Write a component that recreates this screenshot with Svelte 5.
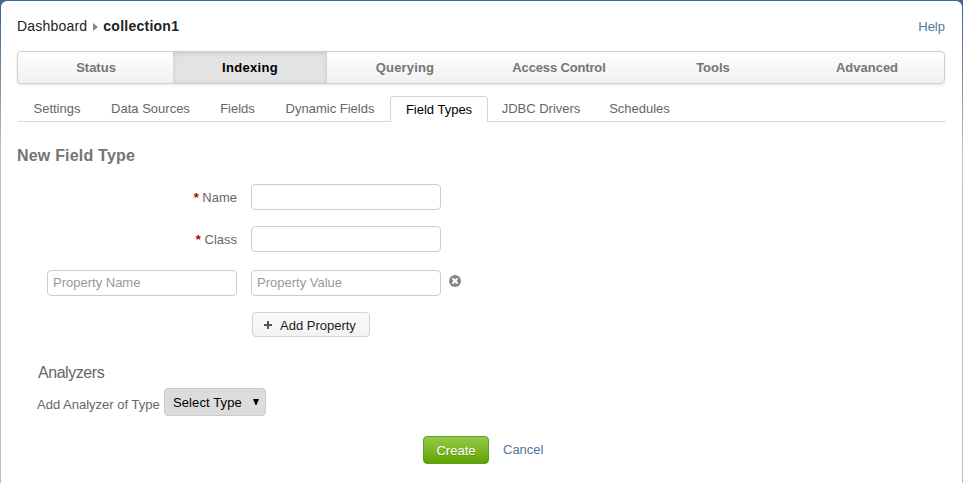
<script>
  const sections = ['Status', 'Indexing', 'Querying', 'Access Control', 'Tools', 'Advanced'];
  const tabs = [
    { label: 'Settings', width: 78 },
    { label: 'Data Sources', width: 109 },
    { label: 'Fields', width: 65 },
    { label: 'Dynamic Fields', width: 120 },
    { label: 'Field Types', width: 98 },
    { label: 'JDBC Drivers', width: 106 },
    { label: 'Schedules', width: 91 }
  ];
  let section = $state('Indexing');
  let tab = $state('Field Types');
</script>

<div class="backdrop">
  <main class="panel">
    <header>
      <div class="crumbs">
        <span class="home">Dashboard</span>
        <svg width="5" height="8" viewBox="0 0 5 8"><path d="M0 0L5 4L0 8Z" fill="#858585" /></svg>
        <strong>collection1</strong>
      </div>
      <a class="help" href="#help">Help</a>
    </header>

    <nav class="sections">
      {#each sections as name}
        <button class:active={section === name} onclick={() => (section = name)}>{name}</button>
      {/each}
    </nav>

    <nav class="tabs">
      {#each tabs as t}
        <button class:active={tab === t.label} style="width: {t.width}px" onclick={() => (tab = t.label)}>{t.label}</button>
      {/each}
    </nav>

    <h1>New Field Type</h1>

    <form onsubmit={(e) => e.preventDefault()}>
      <div class="row">
        <label for="name"><b>*</b> Name</label>
        <input id="name" />
      </div>
      <div class="row second">
        <label for="class"><b>*</b> Class</label>
        <input id="class" />
      </div>
      <div class="row property">
        <input placeholder="Property Name" />
        <input placeholder="Property Value" />
        <button class="remove" type="button" aria-label="Remove property">
          <svg width="12" height="12" viewBox="0 0 12 12">
            <circle cx="6" cy="6" r="6" fill="#858585" />
            <path d="M3.5 3.5L8.5 8.5M8.5 3.5L3.5 8.5" stroke="#fff" stroke-width="2.1" />
          </svg>
        </button>
      </div>
      <button class="add" type="button">
        <svg width="8" height="8" viewBox="0 0 8 8"><path d="M4 0V8M0 4H8" stroke="#555" stroke-width="2" /></svg>
        <span>Add Property</span>
      </button>

      <h2>Analyzers</h2>
      <div class="analyzer">
        <span class="caption">Add Analyzer of Type</span>
        <button class="select" type="button">
          <span>Select Type</span>
          <svg width="6" height="6" viewBox="0 0 6 6"><path d="M0 0H6L3.5 6H2.5Z" fill="#000" /></svg>
        </button>
      </div>

      <div class="actions">
        <button class="create">Create</button>
        <a href="#cancel">Cancel</a>
      </div>
    </form>
  </main>
</div>

<style>
  :global(body) { margin: 0; overflow: hidden; }
  * { box-sizing: border-box; }
  .backdrop {
    height: 483px;
    padding: 1px 1px 0;
    background: linear-gradient(#3f6796 0, #44698f 20px, #c2c2c2 155px, #bcbcbc 100%);
    font: 13px/16px "Liberation Sans", Arial, sans-serif;
    color: #666;
  }
  .panel {
    height: 482px;
    padding: 16px 16px 0;
    background: #fff;
    border-radius: 6px 6px 0 0;
  }
  button { font: inherit; color: inherit; border: 0; padding: 0; margin: 0; background: none; white-space: nowrap; }
  a { color: #4d779f; text-decoration: none; }
  header { display: flex; justify-content: space-between; height: 34px; }
  .crumbs { display: flex; height: 18px; align-items: center; color: #222; font-size: 14px; line-height: 18px; }
  .crumbs svg { margin: 1px 5px 0 6px; }
  .home { letter-spacing: .2px; }
  strong { letter-spacing: .25px; }
  .help { margin: 2px 1px 0 0; letter-spacing: 0; }
  .sections {
    display: flex;
    width: 928px;
    height: 33px;
    border: 1px solid #d0d0d0;
    border-radius: 4px;
    background: linear-gradient(#fff, #f0f0f0);
    box-shadow: 0 1px 3px rgba(0, 0, 0, .1);
  }
  .sections button { flex: 1; height: 31px; font-weight: bold; color: #757575; letter-spacing: 0; padding-top: 1px; }
  .sections button:first-child { flex: none; width: 155px; padding-left: 1px; }
  .sections button:nth-child(2) { letter-spacing: .3px; }
  .sections button:nth-child(3) { letter-spacing: .15px; padding-left: 1px; }
  .sections button:nth-child(4) { letter-spacing: -.15px; }
  .sections button.active { color: #000; background: #e3e3e3; box-shadow: inset 0 1px 5px rgba(0, 0, 0, .14); }
  .tabs { display: flex; align-items: flex-end; width: 928px; height: 38px; margin-left: 1px; border-bottom: 1px solid #d7d7d7; }
  .tabs button { flex: none; height: 26px; padding-top: 2px; letter-spacing: 0; }
  .tabs button.active {
    margin-bottom: -1px;
    height: 26px;
    padding-top: 1px;
    border: 1px solid #d5d5d5;
    border-bottom: 0;
    border-radius: 4px 4px 0 0;
    background: #fff;
    color: #000;
  }
  h1 { margin: 24px 0 0; font-size: 16px; line-height: 20px; letter-spacing: .2px; color: #757575; }
  .row { display: flex; align-items: center; height: 26px; margin-top: 18px; }
  .row.second { margin-top: 16px; }
  .row.property { margin: 18px 0 0 30px; gap: 14px; }
  label { width: 220px; margin-right: 14px; padding-top: 2px; text-align: right; }
  label b { color: #a00; }
  input {
    width: 190px;
    height: 26px;
    padding: 0 5px 2px;
    border: 1px solid #ccc;
    border-radius: 4px;
    background: #fff;
    font: inherit;
    letter-spacing: 0;
    outline: 0;
  }
  input::placeholder { color: #999; opacity: 1; }
  .remove { display: flex; margin: -4px 0 0 -6px; }
  .add {
    display: flex;
    align-items: center;
    width: 118px;
    height: 25px;
    margin: 16px 0 0 235px;
    padding: 1px 0 0 11px;
    border: 1px solid #d3d3d3;
    border-radius: 4px;
    background: linear-gradient(#fafafa, #f2f2f2);
    color: #222;
    gap: 8px;
  }
  .add span { padding-top: 2px; }
  h2 { margin: 27px 0 0 21px; font-size: 16px; line-height: 18px; letter-spacing: -.45px; font-weight: normal; }
  .analyzer { display: flex; align-items: center; height: 28px; margin: 6px 0 0 20px; }
  .caption { width: 127px; padding-top: 6px; white-space: nowrap; }
  .select {
    display: flex;
    align-items: center;
    justify-content: space-between;
    width: 102px;
    height: 28px;
    padding: 0 6px 0 8px;
    border: 1px solid #ccc;
    border-radius: 4px;
    background: #dcdcdc;
    color: #000;
  }
  .select span { padding-top: 2px; letter-spacing: .1px; }
  .actions { display: flex; margin: 20px 0 0 406px; height: 28px; }
  .create {
    width: 66px;
    height: 28px;
    padding-top: 2px;
    border: 1px solid #50a02c;
    border-radius: 4px;
    background: linear-gradient(#95cb49, #62a400);
    color: #fff;
    text-shadow: 0 1px 1px rgba(0, 0, 0, .15);
  }
  .actions a { margin: 6px 0 0 14px; }
</style>
